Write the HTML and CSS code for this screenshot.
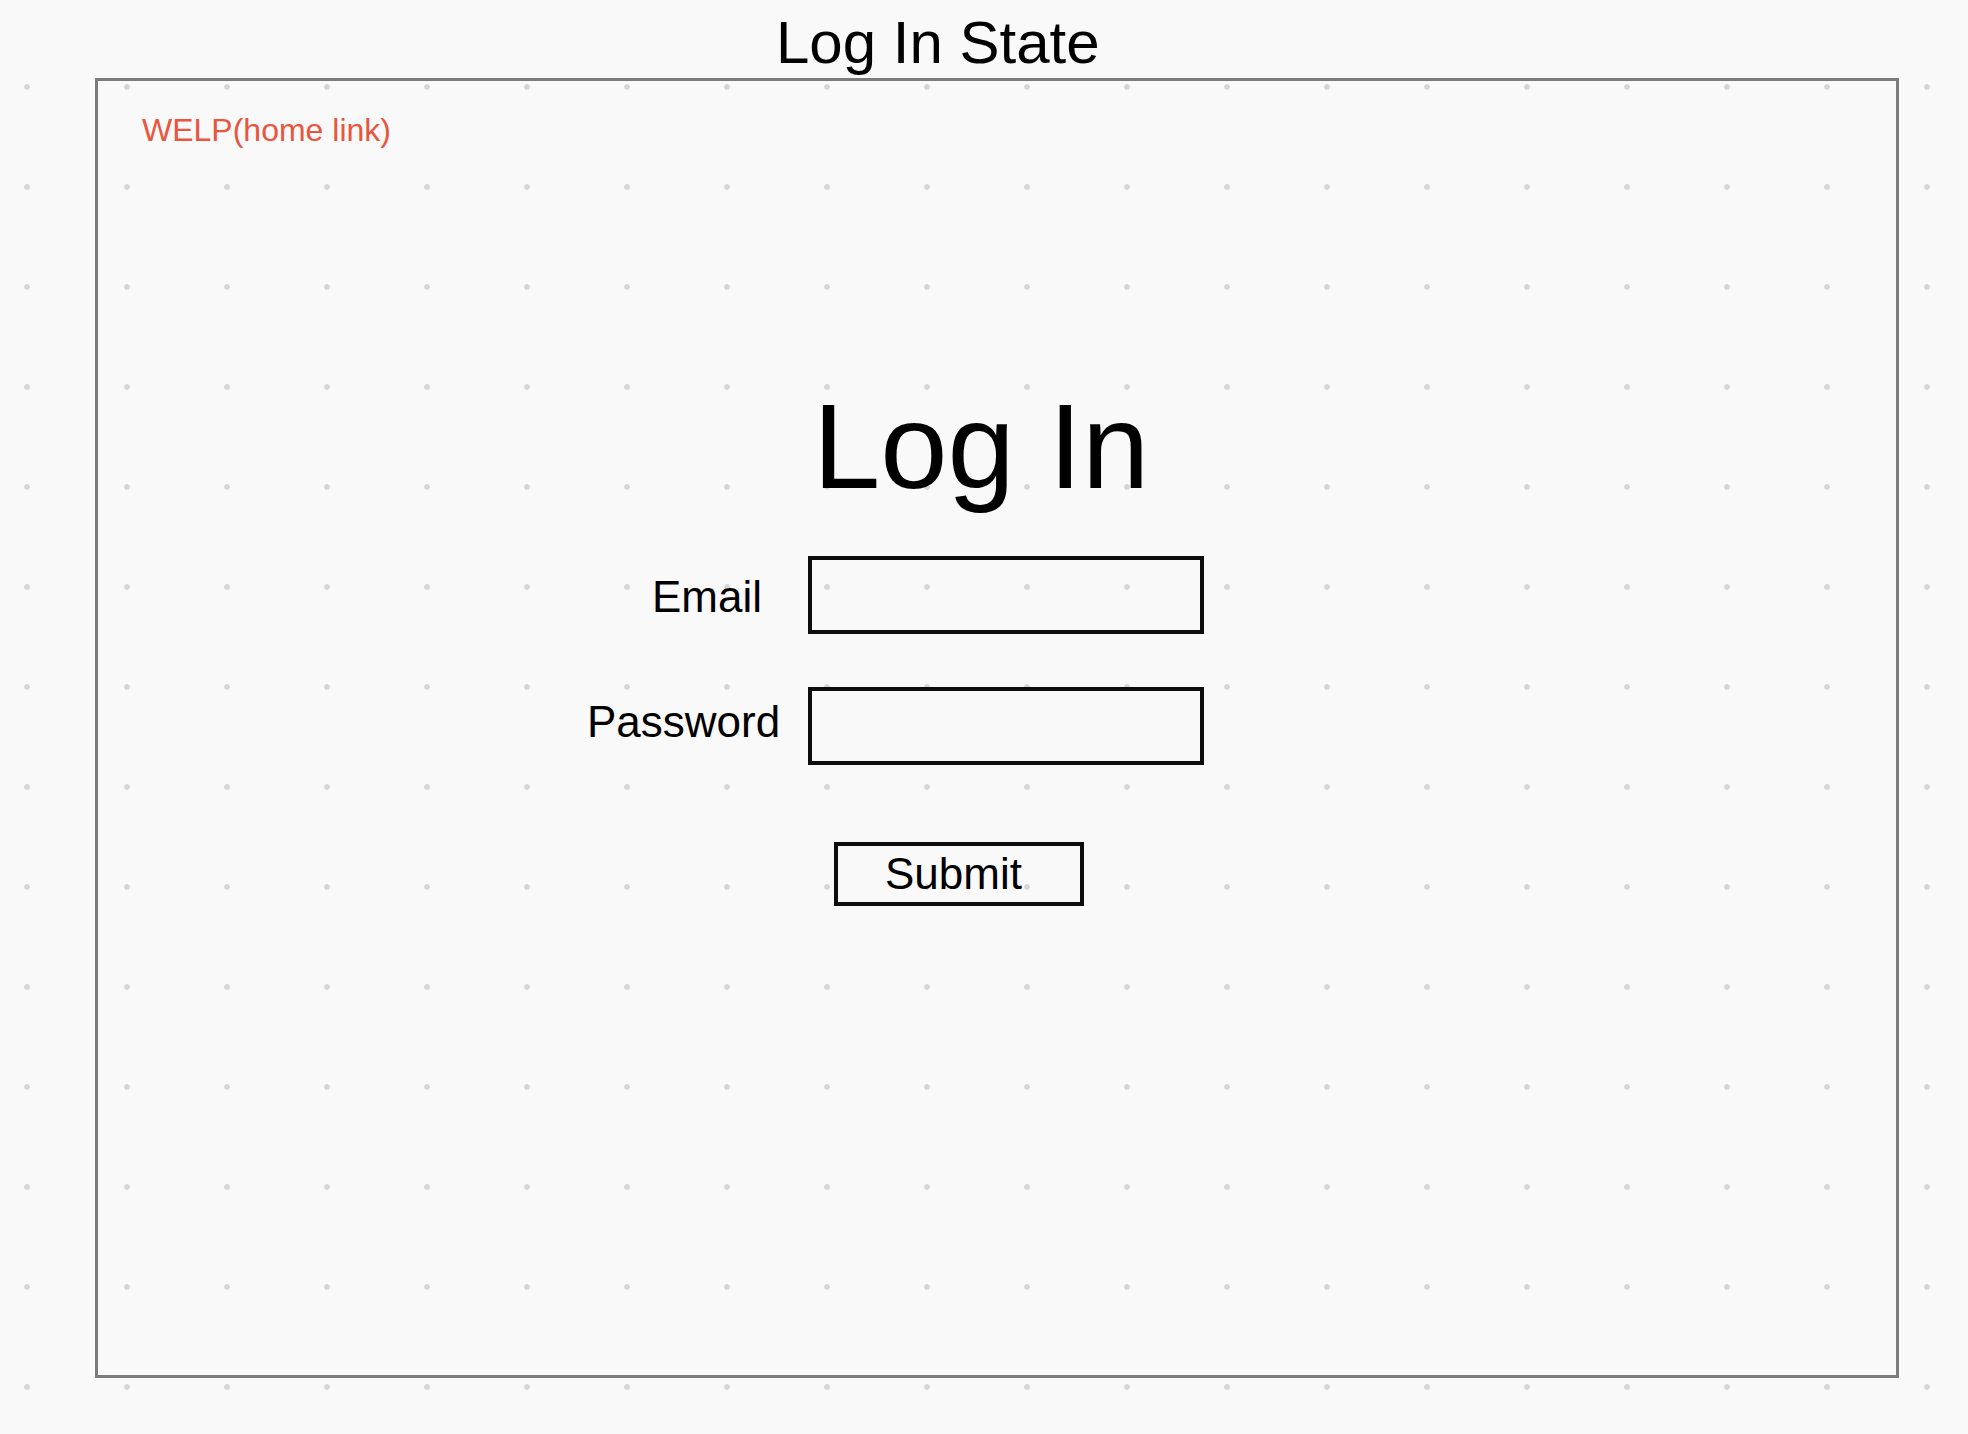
FILE: index.html
```html
<!DOCTYPE html>
<html lang="en">
<head>
<meta charset="utf-8">
<title>Log In State</title>
<link rel="stylesheet" href="styles.css">
</head>
<body>
  <div class="page-title">Log In State</div>
  <div class="frame">
    <a class="home-link" href="#">WELP(home link)</a>
    <form class="login">
      <h1 class="login-title">Log In</h1>
      <div class="field field-email">
        <label class="field-label" for="email">Email</label>
        <input class="field-input" id="email" type="text">
      </div>
      <div class="field field-password">
        <label class="field-label" for="password">Password</label>
        <input class="field-input" id="password" type="password">
      </div>
      <button class="submit" type="button">Submit</button>
    </form>
  </div>
</body>
</html>
```

FILE: styles.css
```css
html, body {
  margin: 0;
  padding: 0;
}

body {
  width: 1968px;
  height: 1434px;
  overflow: hidden;
  background-color: #f9f9f9;
  background-image: radial-gradient(circle at center, #d6d6d6 0, #d6d6d6 2.5px, rgba(214,214,214,0) 3.2px);
  background-size: 100px 100px;
  background-position: -23px 37px;
  font-family: "Liberation Sans", Helvetica, Arial, sans-serif;
  color: #000;
}

.page-title {
  box-sizing: border-box;
  height: 78px;
  padding: 8px 0 0 776px;
  font-size: 60px;
  line-height: 70px;
}

.frame {
  box-sizing: border-box;
  margin-left: 95px;
  width: 1804px;
  height: 1300px;
  border: 3px solid #7c7c7c;
}

.home-link {
  display: block;
  width: max-content;
  padding: 31px 0 0 44px;
  font-size: 32px;
  line-height: 36px;
  color: #e9553d;
  text-decoration: none;
}

.login {
  margin: 228px 0 0 489px;
  display: flex;
  flex-direction: column;
  align-items: flex-start;
}

.login-title {
  margin: 0 0 0 226px;
  font-size: 121px;
  font-weight: normal;
  line-height: 140px;
}

.field {
  display: flex;
  align-items: flex-start;
  margin-top: 53px;
}

.field-email {
  margin-top: 40px;
}

.field-label {
  box-sizing: border-box;
  width: 221px;
  font-size: 44px;
  line-height: 50px;
}

.field-email .field-label {
  padding: 16px 0 0 65px;
}

.field-password .field-label {
  padding: 10px 0 0 0;
}

.field-input {
  box-sizing: border-box;
  width: 396px;
  height: 78px;
  margin: 0;
  padding: 0 12px;
  border: 4px solid #0d0d0d;
  border-radius: 0;
  background: transparent;
  font-family: inherit;
  font-size: 30px;
  outline: none;
}

.submit {
  box-sizing: border-box;
  margin: 77px 0 0 247px;
  width: 250px;
  height: 64px;
  padding: 0 0 0 47px;
  border: 4px solid #0d0d0d;
  border-radius: 0;
  background: transparent;
  font-family: inherit;
  font-size: 44px;
  line-height: 56px;
  color: #000;
  text-align: left;
  cursor: pointer;
}
```
